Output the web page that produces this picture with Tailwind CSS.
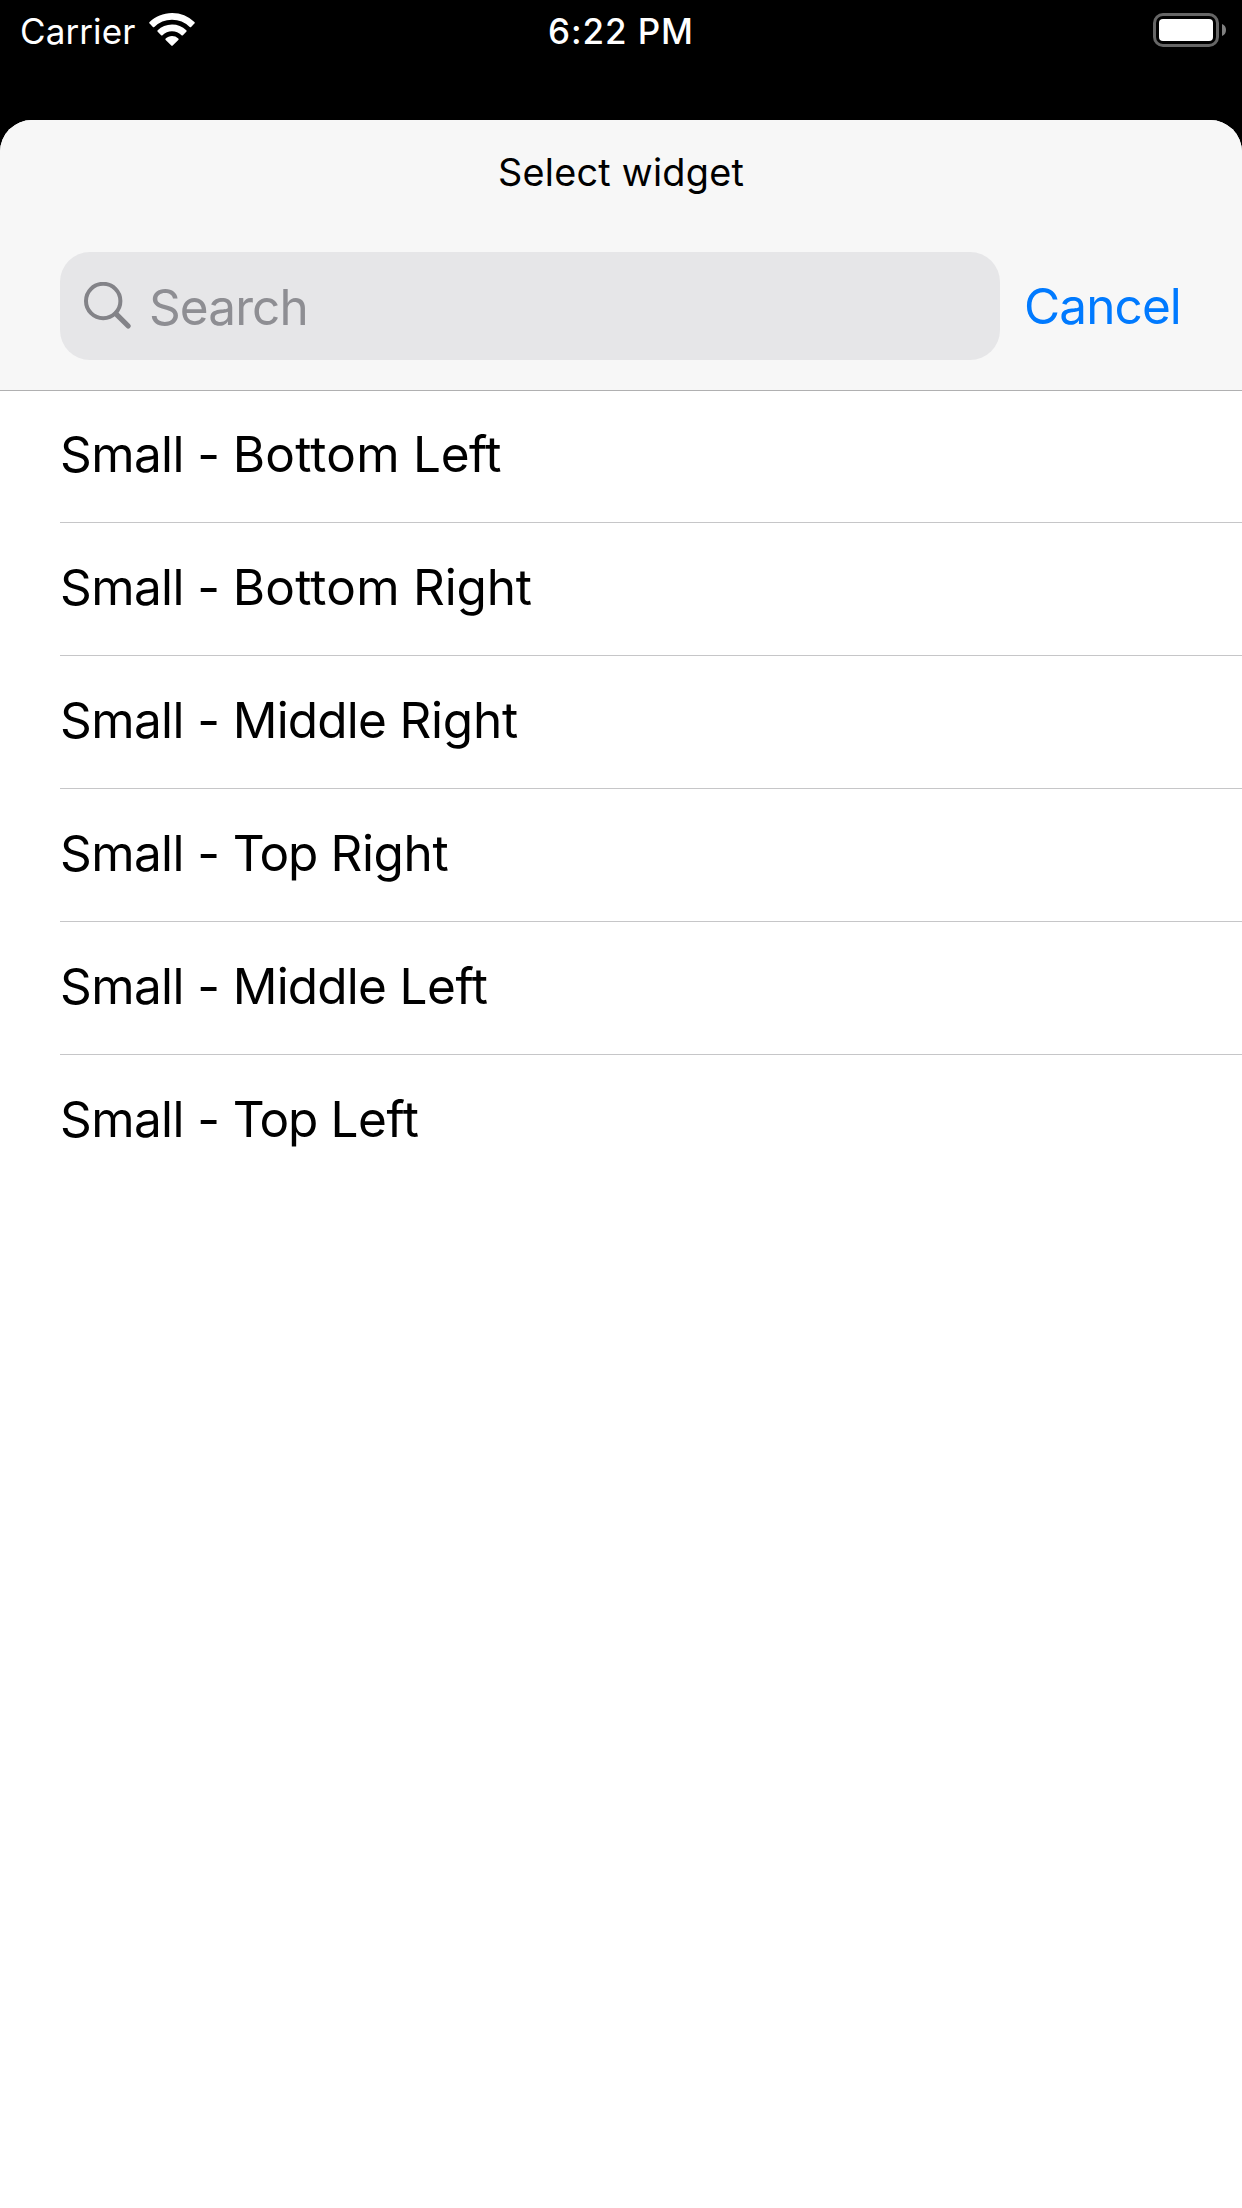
<!DOCTYPE html>
<html lang="en">
<head>
    <meta charset="UTF-8">
    <meta name="viewport" content="width=device-width, initial-scale=1.0">
    <title>Select widget</title>
    <script src="https://cdn.jsdelivr.net/npm/@tailwindcss/browser@4"></script>
</head>
<body class="bg-black min-h-screen flex flex-col font-['Inter',sans-serif] text-black">
    <!-- Status bar -->
    <div class="h-[120px] shrink-0 grid grid-cols-3 items-start text-white leading-[62px]">
        <div class="flex pl-5 text-[35px] tracking-[0.1px]">
            <span class="w-[129px]">Carrier</span>
            <svg class="w-[46px] h-[34px] mt-[13px]" viewBox="0 0 46 34" fill="currentColor">
                <path d="M23 0C14.300 0 6.300 3.500 .6 9.100a1 1 0 0 0 0 1.500l3.300 3.300a1 1 0 0 0 1.400 0A25.200 25.200 0 0 1 23 6.700a25.200 25.200 0 0 1 17.700 7.200 1 1 0 0 0 1.400 0l3.300-3.300a1 1 0 0 0 0-1.500A32 32 0 0 0 23 0Z"/>
                <path d="M23 11.500c-5.600 0-10.600 2.200-14.300 5.800a1 1 0 0 0 0 1.500l3.400 3.400a1 1 0 0 0 1.400 0A13.700 13.700 0 0 1 23 18.300a13.700 13.700 0 0 1 9.500 3.900 1 1 0 0 0 1.400 0l3.400-3.400a1 1 0 0 0 0-1.500A20.500 20.500 0 0 0 23 11.500Z"/>
                <path d="M23 23c-2.400 0-4.600.9-6.300 2.400a1 1 0 0 0 0 1.500l5.600 5.700a1 1 0 0 0 1.400 0l5.600-5.700a1 1 0 0 0 0-1.500A9.400 9.400 0 0 0 23 23Z"/>
            </svg>
        </div>
        <div class="text-center text-[35px] font-medium tracking-[0.9px]">6:22 PM</div>
        <div class="flex justify-end pt-[13px] pr-4">
            <svg class="w-[73px] h-[34px]" viewBox="0 0 73 34">
                <rect x="1.500" y="1.500" width="63" height="31" rx="8.500" fill="none" stroke="#666" stroke-width="3"/>
                <rect x="6" y="6" width="54" height="22" rx="4" fill="#fff"/>
                <path d="M69 11c2.600 1 4 3.300 4 6s-1.400 5-4 6Z" fill="#808080"/>
            </svg>
        </div>
    </div>

    <!-- Sheet -->
    <div class="grow bg-white rounded-t-[32px] overflow-hidden">
        <div class="h-[271px] bg-[#f7f7f7] border-b border-[#b0b0b1]">
            <h1 class="h-[132px] pt-[22px] text-center text-[37.8px] leading-[60px] tracking-[0.25px]">Select widget</h1>
            <div class="flex items-center pl-[60px] h-[108px]">
                <div class="flex items-center w-[940px] h-[108px] rounded-[30px] bg-[#e6e6e8] text-[#8e8e93]">
                    <svg class="w-[48px] h-[48px] ml-6 mr-[17px] text-[#838388]" viewBox="0 0 48 48" fill="none" stroke="currentColor" stroke-linecap="round">
                        <circle cx="19.200" cy="19" r="17.200" stroke-width="4"/>
                        <path d="M32 31.800 44.200 44" stroke-width="5.200"/>
                    </svg>
                    <span class="text-[49.5px] tracking-[-0.9px] leading-[60px] pt-px">Search</span>
                </div>
                <a href="#" class="ml-[24px] text-[#007aff] text-[49.5px] tracking-[-0.9px] leading-[60px]">Cancel</a>
            </div>
        </div>

        <!-- Widget list -->
        <ul class="pl-[60px] text-[49.5px] tracking-[-0.6px] leading-[128px]">
            <li class="h-[132px] border-b border-[#c6c6c8] leading-[126px]">Small - <span class="tracking-[0.2px]">Bottom</span> <span class="tracking-[-0.4px]">Left</span></li>
            <li class="h-[133px] border-b border-[#c6c6c8]">Small - <span class="tracking-[0.2px]">Bottom</span> <span class="tracking-[-0.2px]">Right</span></li>
            <li class="h-[133px] border-b border-[#c6c6c8]">Small - <span class="tracking-[-0.8px]">Middle</span> <span class="tracking-[-0.2px]">Right</span></li>
            <li class="h-[133px] border-b border-[#c6c6c8]">Small - <span class="tracking-[-1.2px]">Top</span> <span class="tracking-[-0.4px]">Right</span></li>
            <li class="h-[133px] border-b border-[#c6c6c8]">Small - <span class="tracking-[-0.8px]">Middle</span> <span class="tracking-[-0.4px]">Left</span></li>
            <li class="h-[133px]">Small - <span class="tracking-[-1.2px]">Top</span> <span class="tracking-[-0.4px]">Left</span></li>
        </ul>
    </div>
</body>
</html>
